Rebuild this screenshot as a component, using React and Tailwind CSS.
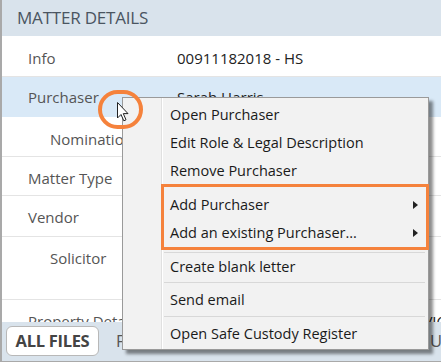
import React from "react";

const Row = ({ label, value, indent, h, pt = "pt-[10px]", bg = "bg-white", border = "border-[#e4e4e4]", valueClass = "" }) => (
  <div className={`flex items-start shrink-0 border-b ${border} ${bg} ${h} ${pt}`}>
    <div className={`w-[175px] shrink-0 text-[15px] leading-[22px] text-[#555] whitespace-nowrap overflow-hidden ${indent ? "pl-[48px]" : "pl-[26px]"}`}>
      {label}
    </div>
    <div className={`flex-1 text-[15px] leading-[22px] text-[#222] whitespace-nowrap overflow-hidden ${valueClass}`}>{value}</div>
  </div>
);

const Item = ({ children, arrow, h = "h-[28px]" }) => (
  <div className={`flex items-center ${h} pl-[47px] pr-[10px] text-[14.5px] text-[#1a1a1a] whitespace-nowrap`}>
    <span className="flex-1">{children}</span>
    {arrow && (
      <svg width="5" height="8" viewBox="0 0 5 8">
        <path d="M0 0 L5 4 L0 8 Z" fill="#222" />
      </svg>
    )}
  </div>
);

const Sep = () => <div className="ml-[41px] mr-[3px] h-[1px] bg-[#d8d8d8]" />;

export default function App() {
  return (
    <div className="relative w-[441px] h-[362px] overflow-hidden bg-white font-['Open_Sans',sans-serif] flex flex-col border-l-2 border-[#a9a9a9]">
      {/* Header */}
      <div className="h-[36px] shrink-0 bg-[#d9e3ec] flex items-center pl-[15px] text-[17px] text-[#4a5561] tracking-[-0.2px]">
        MATTER DETAILS
      </div>
      {/* Body */}
      <div className="flex-1 flex flex-col overflow-hidden">
        <Row label="Info" value="00911182018 - HS" h="h-[41px]" pt="pt-[11px]" />
        <Row label="Purchaser" value="Sarah Harris" h="h-[40px]" pt="pt-[9px]" bg="bg-[#d9e9f7]" border="border-[#d9e9f7]" />
        <Row label="Nomination" indent value="" h="h-[40px]" pt="pt-[11px]" />
        <Row label="Matter Type" value="Purchase" h="h-[39px]" pt="pt-[10px]" />
        <Row label="Vendor" value="John Smith" h="h-[41px]" pt="pt-[10px]" />
        <Row label="Solicitor" indent value="" h="h-[63px]" pt="pt-[10px]" />
        <div className="flex items-start shrink-0 h-[40px] pt-[10px]">
          <div className="w-[175px] shrink-0 pl-[26px] text-[15px] leading-[22px] text-[#555] whitespace-nowrap">Property Details</div>
          <div className="flex-1 flex justify-end overflow-hidden text-[15px] leading-[22px] text-[#222] whitespace-nowrap mr-[-5px]">
            12 King Street, Melbourne VIC
          </div>
        </div>
      </div>
      {/* Bottom bar */}
      <div className="h-[40px] shrink-0 bg-[#d9e3ec] border-b border-[#a9a9a9] flex items-center pl-[4px] pb-[1px] overflow-hidden">
        <div className="h-[30px] w-[93px] shrink-0 flex items-center justify-center bg-white border border-[#b8b8b8] rounded-[6px] text-[16.5px] font-bold text-[#444] whitespace-nowrap tracking-[-0.3px]">
          ALL FILES
        </div>
        <div className="ml-[17px] text-[16.5px] text-[#555] whitespace-nowrap">FAVOURITES</div>
        <div className="ml-auto w-[11px] shrink-0 overflow-hidden text-[16.5px] text-[#555] whitespace-nowrap">UNREAD</div>
      </div>

      {/* Context menu */}
      <div className="absolute left-[120px] top-[97px] w-[307px] bg-[#f2f2f2] border border-[#9a9a9a] shadow-[4px_4px_3px_rgba(0,0,0,0.45)] flex flex-col">
        <div className="absolute left-[38px] top-0 bottom-0 w-[1px] bg-[#e0e0e0]" />
        <div className="absolute left-[39px] top-0 bottom-0 w-[1px] bg-white" />
        <div className="h-[3px]" />
        <Item>Open Purchaser</Item>
        <Item>Edit Role &amp; Legal Description</Item>
        <Item>Remove Purchaser</Item>
        <div className="h-[6px]" />
        <Item arrow>Add Purchaser</Item>
        <Item arrow>Add an existing Purchaser...</Item>
        <div className="h-[5px]" />
        <Sep />
        <Item>Create blank letter</Item>
        <div className="h-[1px]" />
        <Sep />
        <div className="h-[3px]" />
        <Item>Send email</Item>
        <div className="h-[2px]" />
        <Sep />
        <div className="h-[3px]" />
        <Item>Open Safe Custody Register</Item>
        <div className="h-[1px]" />
      </div>

      {/* Orange highlight box */}
      <div className="absolute left-[159px] top-[184px] w-[268px] h-[66px] border-[3px] border-[#f5823c]" />

      {/* Orange circle */}
      <div className="absolute left-[96px] top-[90px] w-[45px] h-[39px] rounded-full border-[4px] border-[#f5823c]" />

      {/* Cursor */}
      <svg className="absolute left-[115px] top-[102px]" width="13" height="20" viewBox="0 0 13 20">
        <path d="M0.5 0.5 L0.5 16 L4 12.5 L6.8 18.8 L9 17.8 L6.3 11.6 L11 11.6 Z" fill="white" stroke="#222" strokeWidth="1" strokeLinejoin="round" />
      </svg>
    </div>
  );
}
